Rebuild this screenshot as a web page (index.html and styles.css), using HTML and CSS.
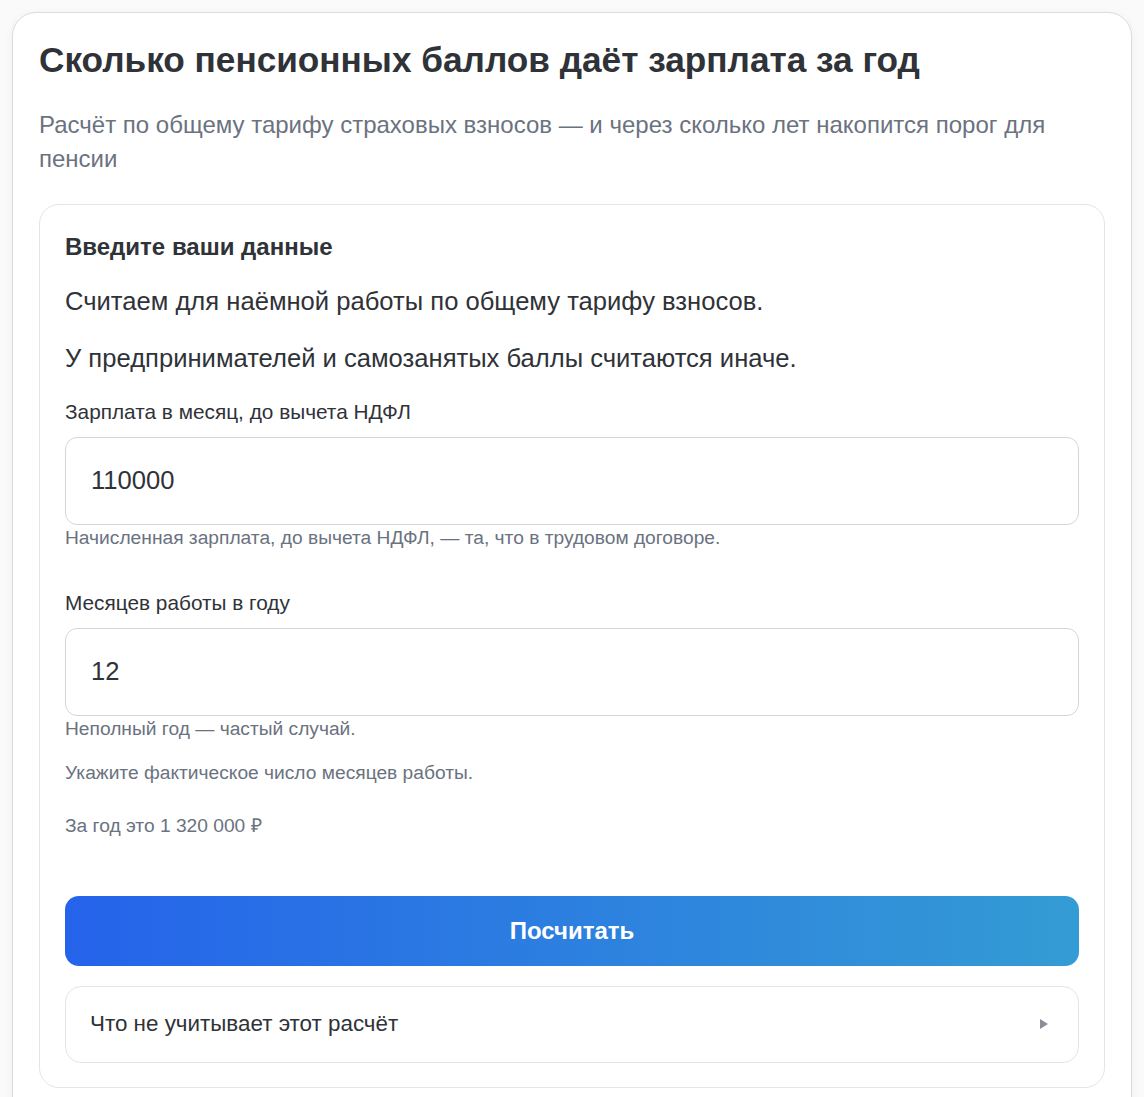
FILE: index.html
```html
<!DOCTYPE html>
<html lang="ru">
<head>
    <meta charset="UTF-8">
    <meta name="viewport" content="width=device-width, initial-scale=1.0">
    <title>Пенсионные баллы за год</title>
    <link rel="stylesheet" href="styles.css">
</head>
<body>
    <div class="page-card">
        <h1 class="page-title">Сколько пенсионных баллов даёт зарплата за год</h1>
        <p class="page-lead">Расчёт по общему тарифу страховых взносов — и через сколько лет накопится порог для пенсии</p>

        <form class="calc-card">
            <h2 class="calc-title">Введите ваши данные</h2>
            <p class="calc-note">Считаем для наёмной работы по общему тарифу взносов.</p>
            <p class="calc-note calc-note-next">У предпринимателей и самозанятых баллы считаются иначе.</p>

            <div class="field">
                <label class="field-label" for="salary">Зарплата в месяц, до вычета НДФЛ</label>
                <input class="field-input" id="salary" type="text" value="110000">
                <p class="field-hint">Начисленная зарплата, до вычета НДФЛ, — та, что в трудовом договоре.</p>
            </div>

            <div class="field field-months">
                <label class="field-label" for="months">Месяцев работы в году</label>
                <input class="field-input" id="months" type="text" value="12">
                <p class="field-hint">Неполный год — частый случай.</p>
                <p class="field-hint field-hint-gap">Укажите фактическое число месяцев работы.</p>
                <p class="field-hint field-total">За год это 1 320 000 ₽</p>
            </div>

            <button class="calc-button" type="button">Посчитать</button>

            <details class="calc-details">
                <summary class="calc-summary">Что не учитывает этот расчёт <span class="summary-arrow"></span></summary>
            </details>
        </form>
    </div>
</body>
</html>
```

FILE: styles.css
```css
/* Reset and base styles */
* {
    margin: 0;
    padding: 0;
    box-sizing: border-box;
    font-family: 'Liberation Sans', Arial, sans-serif;
}

body {
    background-color: #fafafa;
    padding: 12px;
    color: #2f3338;
}

/* Outer card */
.page-card {
    background-color: #ffffff;
    border: 1px solid #dcdcdc;
    border-radius: 24px;
    box-shadow: 0 2px 10px rgba(0, 0, 0, 0.05);
    padding: 26px 26px 40px;
    width: 1120px;
}

.page-title {
    font-size: 35.2px;
    line-height: 42px;
    font-weight: bold;
    color: #2f3338;
}

.page-lead {
    margin-top: 26.5px;
    font-size: 24px;
    line-height: 34.5px;
    color: #6b7280;
}

/* Inner form card */
.calc-card {
    margin-top: 27px;
    border: 1px solid #e5e5e5;
    border-radius: 20px;
    padding: 27px 25px 24px;
}

.calc-title {
    font-size: 24px;
    line-height: 30px;
    font-weight: bold;
    color: #2f3338;
}

.calc-note {
    margin-top: 22.5px;
    font-size: 25.6px;
    line-height: 35px;
    color: #2f3338;
}

.calc-note-next {
    margin-top: 22px;
}

.field {
    margin-top: 21.5px;
}

.field-months {
    margin-top: 38px;
}

.field-label {
    display: block;
    font-size: 20.8px;
    line-height: 28px;
    color: #2f3338;
}

.field-input {
    display: block;
    width: 100%;
    height: 88px;
    margin-top: 11px;
    padding: 0 25px;
    border: 1px solid #d6d6d6;
    border-radius: 12px;
    font-size: 25.6px;
    color: #2f3338;
    background-color: #ffffff;
    outline: none;
}

.field-hint {
    font-size: 19.2px;
    line-height: 26px;
    color: #6b7280;
}

.field-hint-gap {
    margin-top: 18px;
}

.field-total {
    margin-top: 27px;
}

/* Button */
.calc-button {
    display: block;
    width: 100%;
    height: 70px;
    margin-top: 57px;
    border: none;
    border-radius: 14px;
    background: linear-gradient(90deg, #2563eb 0%, #349cd4 100%);
    color: #ffffff;
    font-size: 24px;
    font-weight: bold;
    cursor: pointer;
}

/* Details */
.calc-details {
    margin-top: 20px;
    border: 1px solid #e5e5e5;
    border-radius: 16px;
}

.calc-summary {
    list-style: none;
    display: flex;
    justify-content: space-between;
    align-items: center;
    height: 75px;
    padding: 0 24px;
    font-size: 22.4px;
    color: #2f3338;
    cursor: pointer;
}

.calc-summary::-webkit-details-marker {
    display: none;
}

.summary-arrow {
    width: 0;
    height: 0;
    border-top: 5px solid transparent;
    border-bottom: 5px solid transparent;
    border-left: 8px solid #8a8f98;
    margin-right: 6px;
}
```
